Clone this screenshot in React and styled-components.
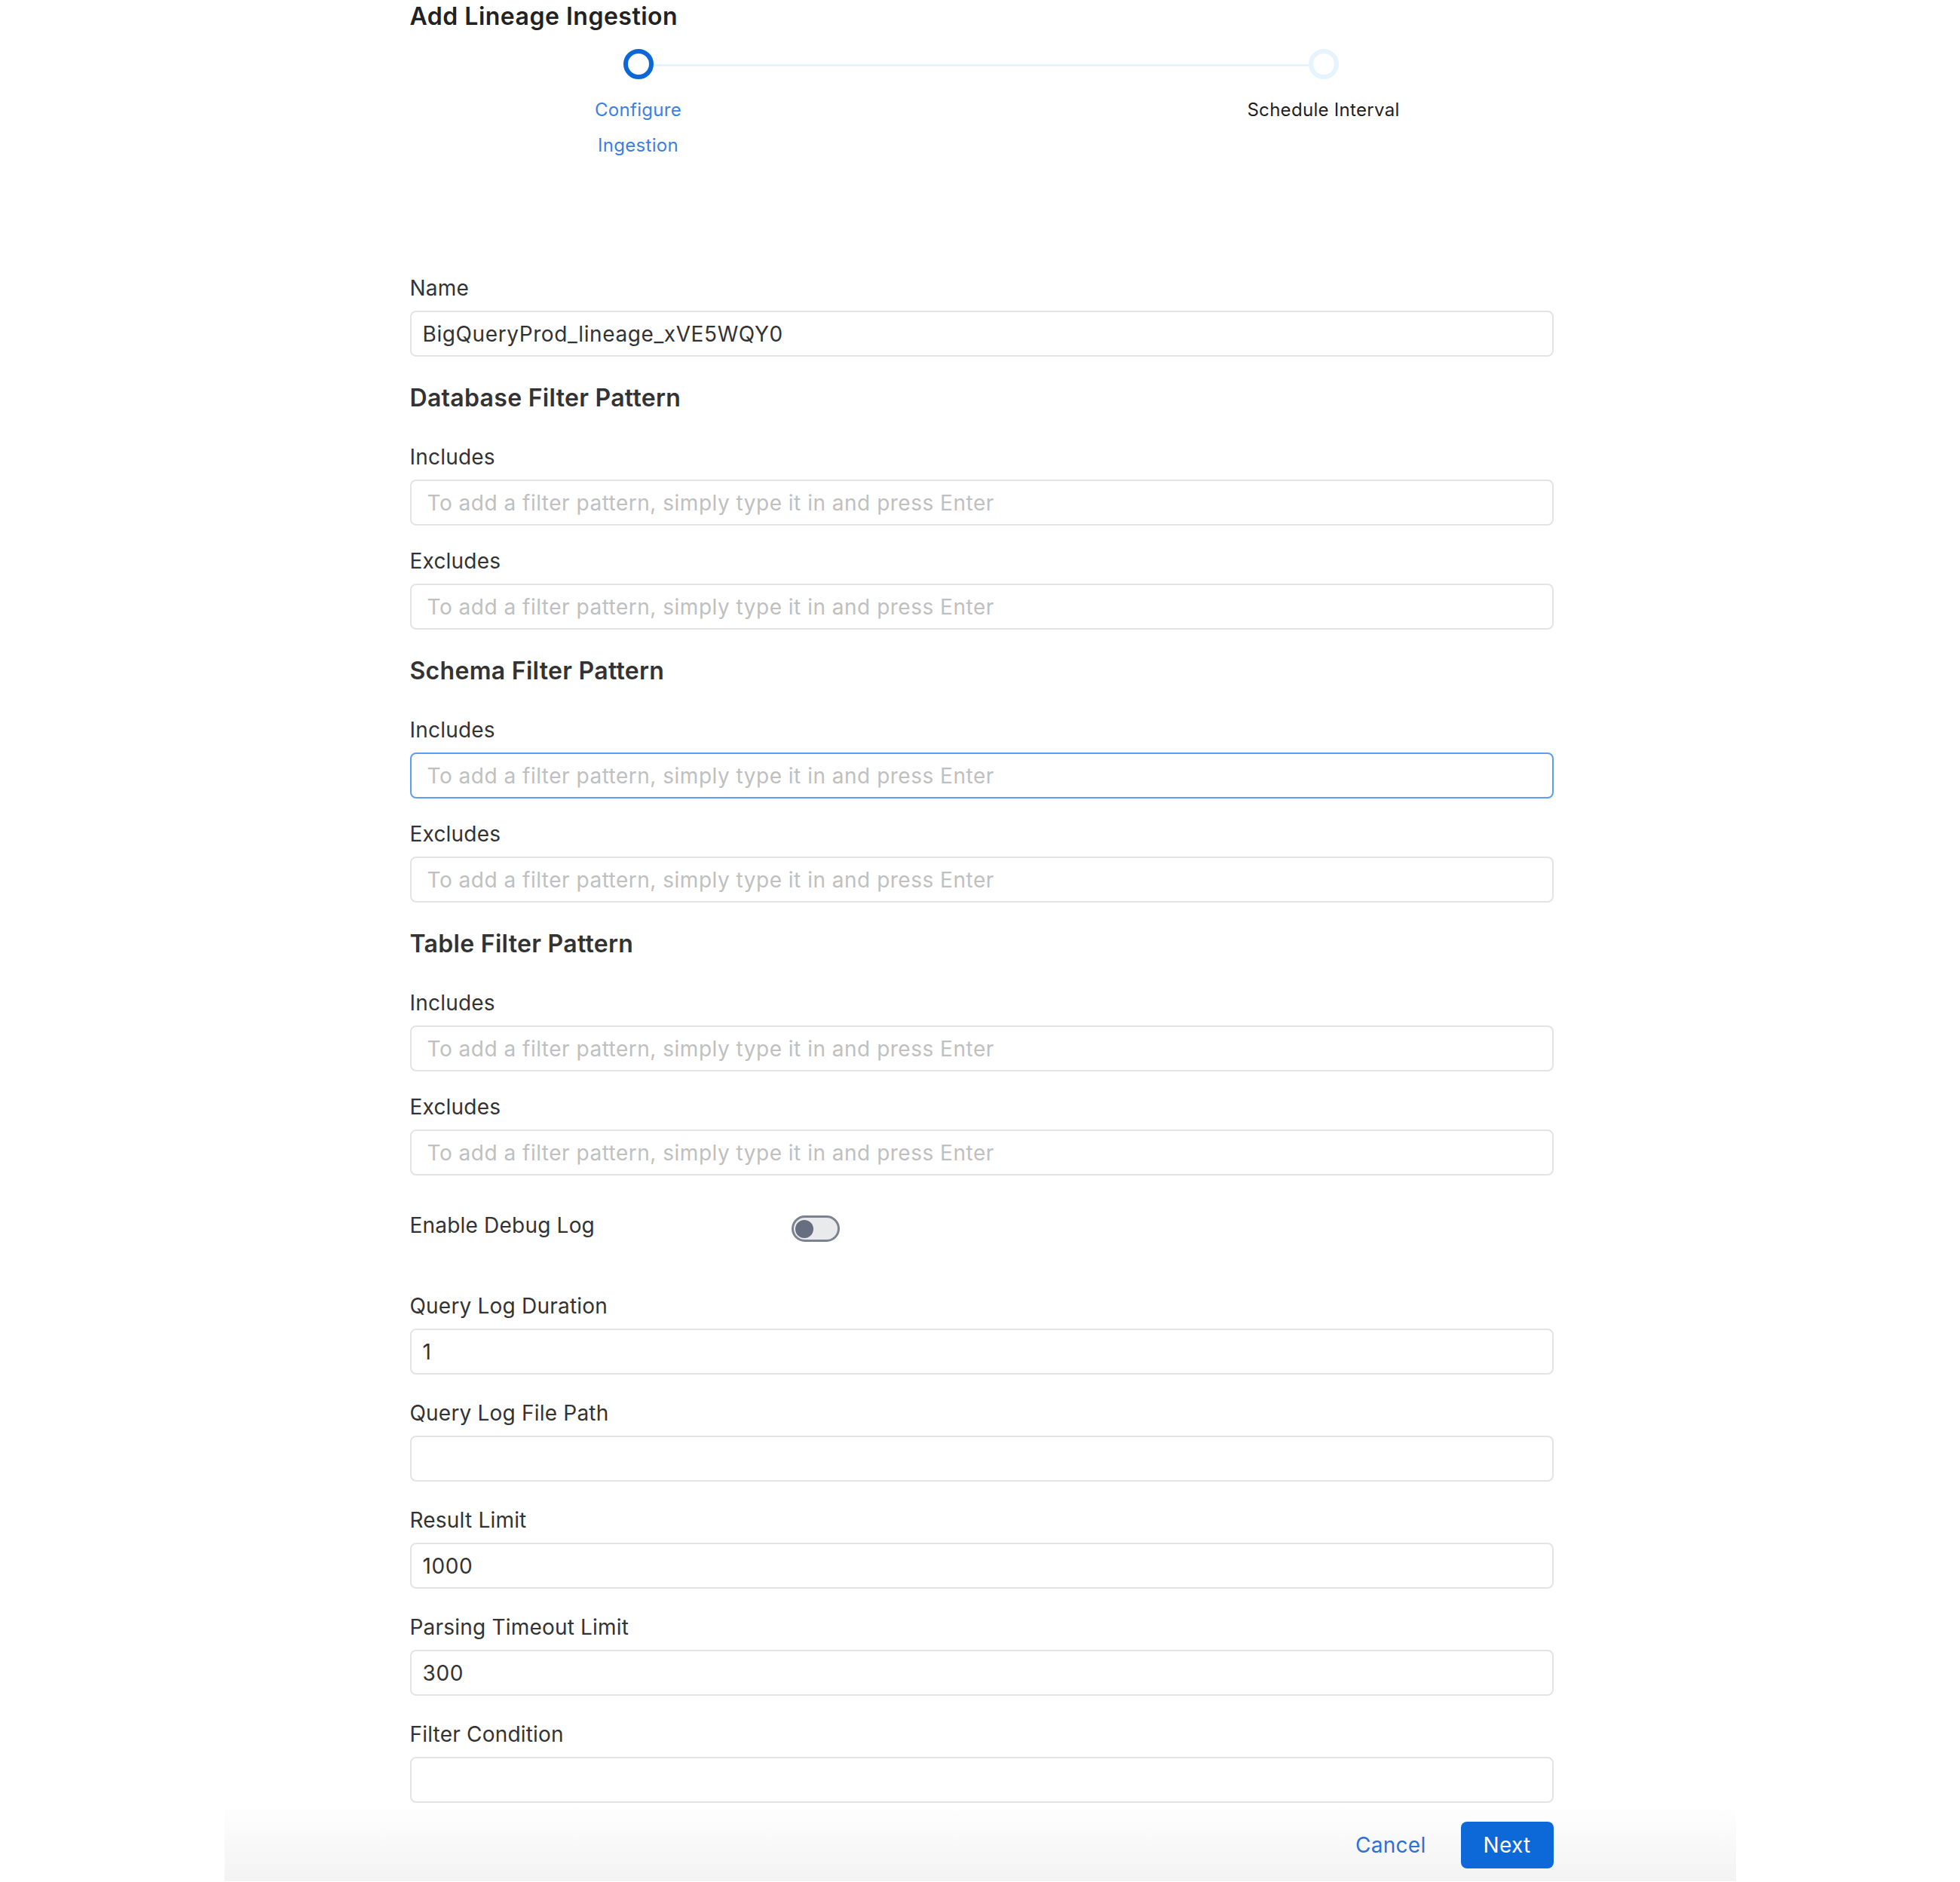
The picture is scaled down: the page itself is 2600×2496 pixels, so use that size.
import React from 'react';
import styled, { createGlobalStyle } from 'styled-components';

const GlobalStyle = createGlobalStyle`
  html, body {
    margin: 0;
    padding: 0;
    background: #ffffff;
  }

  body {
    font-family: Inter, "Noto Sans", sans-serif;
    color: #333333;
  }

  * {
    box-sizing: border-box;
  }
`;

const Page = styled.div`
  width: 2005px;
  margin: 0 auto;
  display: flex;
  flex-direction: column;
`;

const Content = styled.div`
  width: 1517px;
  margin-left: 246px;
`;

const Title = styled.h1`
  margin: 0;
  font-size: 32px;
  font-weight: 600;
  line-height: 44px;
  letter-spacing: 0.5px;
  color: #222222;
`;

const Stepper = styled.div`
  margin-top: 21px;
  margin-bottom: 148px;
`;

const StepsTrack = styled.div`
  display: flex;
  align-items: center;
  margin: 0 285px 0 283px;
  height: 40px;
`;

const StepDot = styled.div`
  width: 40px;
  height: 40px;
  flex: none;
  border-radius: 50%;
  background: #ffffff;
  border: 6px solid ${p => (p.$active ? '#0b68d6' : '#e6f4ff')};
`;

const Connector = styled.div`
  flex: 1;
  height: 3px;
  margin-top: 3px;
  background: #e6f4ff;
`;

const StepLabels = styled.div`
  display: flex;
  justify-content: space-between;
  margin: 17px 165px 0 163px;
`;

const StepLabel = styled.div`
  width: 280px;
  text-align: center;
  font-size: 24px;
  line-height: 47px;
  letter-spacing: 0.3px;
  color: ${p => (p.$active ? '#3b80e3' : '#1f1f1f')};
`;

const SectionHeading = styled.h2`
  margin: ${p => p.$top}px 0 40px;
  font-size: 32px;
  font-weight: 600;
  line-height: 40px;
  letter-spacing: 0.3px;
  color: #333333;
`;

const Field = styled.div`
  margin-bottom: ${p => p.$gap}px;
`;

const Label = styled.label`
  display: block;
  font-size: 28px;
  line-height: 36px;
  letter-spacing: 0.2px;
  margin-bottom: 12px;
  color: #333333;
`;

const TextInput = styled.input`
  display: block;
  width: 100%;
  height: 61px;
  padding: 0 ${p => (p.$tags ? 21 : 15)}px;
  border: 2px solid ${p => (p.$focused ? '#5b9df5' : '#e4e4e4')};
  border-radius: 8px;
  background: #ffffff;
  font-family: inherit;
  font-size: 28px;
  letter-spacing: ${p => (p.$tags ? 0.5 : 0.6)}px;
  color: #333333;
  outline: none;

  &::placeholder {
    color: #c0c0c0;
  }
`;

const SwitchRow = styled.div`
  display: flex;
  align-items: flex-start;
  margin: 48px 0 67px;
`;

const SwitchLabel = styled.span`
  width: 506px;
  font-size: 28px;
  line-height: 36px;
  letter-spacing: 0.2px;
  color: #333333;
`;

const SwitchTrack = styled.button`
  display: flex;
  align-items: center;
  width: 64px;
  height: 35px;
  margin-top: 5px;
  padding: 0 0 0 2px;
  border: 3px solid #7c828f;
  border-radius: 18px;
  background: #e9eaec;
  cursor: pointer;
`;

const SwitchKnob = styled.span`
  width: 24px;
  height: 24px;
  border-radius: 50%;
  background: #676e80;
`;

const Footer = styled.div`
  display: flex;
  justify-content: flex-end;
  align-items: flex-start;
  gap: 18px;
  height: 104px;
  padding: 25px 242px 0 0;
  background: linear-gradient(180deg, #ffffff 0%, #f3f3f3 100%);
`;

const Button = styled.button`
  height: 62px;
  padding: 0 ${p => (p.$primary ? 30 : 28)}px;
  border: none;
  border-radius: 8px;
  background: ${p => (p.$primary ? '#0d69d8' : 'transparent')};
  color: ${p => (p.$primary ? '#ffffff' : '#2f70d8')};
  font-family: inherit;
  font-size: 28px;
  letter-spacing: 0.3px;
  cursor: pointer;
`;

const PLACEHOLDER = 'To add a filter pattern, simply type it in and press Enter';

const filterSections = [
  { title: 'Database Filter Pattern', focused: null },
  { title: 'Schema Filter Pattern', focused: 'Includes' },
  { title: 'Table Filter Pattern', focused: null },
];

const extraFields = [
  { label: 'Query Log Duration', value: '1' },
  { label: 'Query Log File Path', value: '' },
  { label: 'Result Limit', value: '1000' },
  { label: 'Parsing Timeout Limit', value: '300' },
  { label: 'Filter Condition', value: '' },
];

const App = () => (
  <>
    <GlobalStyle />
    <Page>
      <Content>
        <Title>Add Lineage Ingestion</Title>

        <Stepper>
          <StepsTrack>
            <StepDot $active />
            <Connector />
            <StepDot />
          </StepsTrack>
          <StepLabels>
            <StepLabel $active>Configure<br />Ingestion</StepLabel>
            <StepLabel>Schedule Interval</StepLabel>
          </StepLabels>
        </Stepper>

        <Field $gap={0}>
          <Label>Name</Label>
          <TextInput defaultValue="BigQueryProd_lineage_xVE5WQY0" />
        </Field>

        {filterSections.map(section => (
          <div key={section.title}>
            <SectionHeading $top={35}>{section.title}</SectionHeading>
            {['Includes', 'Excludes'].map((kind, i) => (
              <Field key={kind} $gap={i === 0 ? 29 : 0}>
                <Label>{kind}</Label>
                <TextInput
                  $tags
                  $focused={section.focused === kind}
                  placeholder={PLACEHOLDER}
                />
              </Field>
            ))}
          </div>
        ))}

        <SwitchRow>
          <SwitchLabel>Enable Debug Log</SwitchLabel>
          <SwitchTrack type="button" aria-label="Enable Debug Log">
            <SwitchKnob />
          </SwitchTrack>
        </SwitchRow>

        {extraFields.map((field, i) => (
          <Field key={field.label} $gap={i === extraFields.length - 1 ? 0 : 33}>
            <Label>{field.label}</Label>
            <TextInput defaultValue={field.value} />
          </Field>
        ))}
      </Content>

      <Footer>
        <Button type="button">Cancel</Button>
        <Button type="button" $primary>Next</Button>
      </Footer>
    </Page>
  </>
);

export default App;
